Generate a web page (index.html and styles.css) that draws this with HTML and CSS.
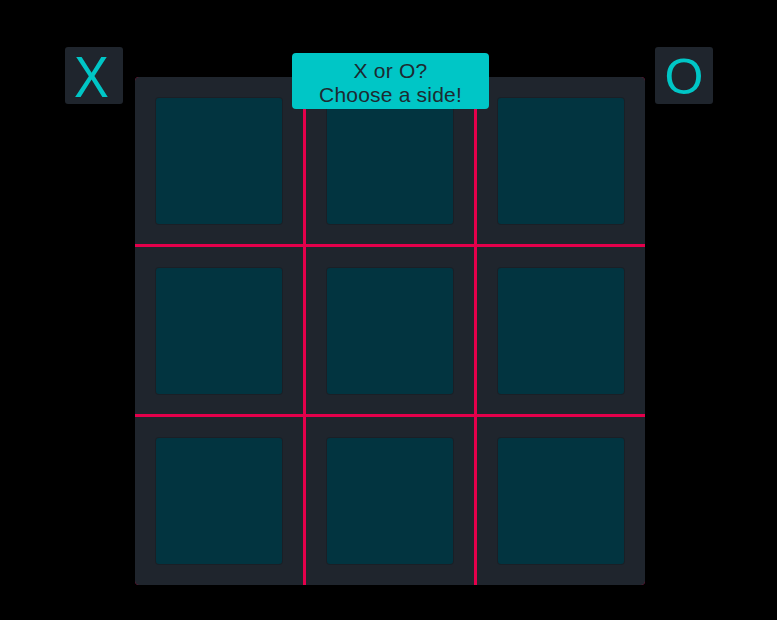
FILE: index.html
```html
<!DOCTYPE html>
<html>
<head>
<meta charset="utf-8">
<link rel="stylesheet" href="styles.css">
</head>
<body>
<div class="game">
  <div class="side side-x"><span class="mark mark-x">X</span></div>
  <div class="board">
    <div class="banner">X or O?<br>Choose a side!</div>
    <div class="cell"><div class="square"></div></div>
    <div class="cell"><div class="square"></div></div>
    <div class="cell"><div class="square"></div></div>
    <div class="cell"><div class="square"></div></div>
    <div class="cell"><div class="square"></div></div>
    <div class="cell"><div class="square"></div></div>
    <div class="cell"><div class="square"></div></div>
    <div class="cell"><div class="square"></div></div>
    <div class="cell"><div class="square"></div></div>
  </div>
  <div class="side side-o"><span class="mark mark-o">O</span></div>
</div>
</body>
</html>
```
FILE: styles.css
```css
html, body {
  margin: 0;
  padding: 0;
  background: #000;
  height: 100%;
}
body {
  font-family: "Liberation Sans", Arial, sans-serif;
}
.game {
  display: flex;
  align-items: flex-start;
  padding: 47px 0 0 65px;
}
.side {
  width: 58px;
  height: 57px;
  background: #1f252d;
  border-radius: 3px;
  display: flex;
  align-items: center;
  justify-content: center;
  color: #00c6c6;
  line-height: 1;
}
.side-x { margin-right: 12px; }
.side-o { margin-left: 10px; }
.mark-x {
  font-size: 58px;
  display: inline-block;
  transform: scaleX(0.9);
  margin-top: 3px;
  margin-right: 5px;
}
.mark-o {
  font-size: 50px;
  display: inline-block;
  margin-top: 2px;
}
.board {
  position: relative;
  margin-top: 30px;
  width: 510px;
  height: 508px;
  display: grid;
  grid-template-columns: 168px 168px 168px;
  grid-template-rows: 167px 167px 168px;
  gap: 3px;
  background: #e4004b;
  border-radius: 4px;
}
.cell {
  background: #1f252d;
  display: flex;
  align-items: center;
  justify-content: center;
}
.cell:nth-child(2) { border-top-left-radius: 4px; }
.cell:nth-child(4) { border-top-right-radius: 4px; }
.cell:nth-child(8) { border-bottom-left-radius: 4px; }
.cell:nth-child(10) { border-bottom-right-radius: 4px; }
.square {
  width: 126px;
  height: 126px;
  background: #023440;
  border-radius: 3px;
  box-shadow: 0 0 0 1px rgba(0,0,0,0.15);
}
.banner {
  position: absolute;
  top: -24px;
  left: 157px;
  width: 197px;
  height: 56px;
  box-sizing: border-box;
  padding-top: 3px;
  background: #00c6c6;
  border-radius: 4px;
  color: #1d2a31;
  font-size: 21px;
  line-height: 24px;
  letter-spacing: 0.2px;
  text-align: center;
  display: flex;
  align-items: center;
  justify-content: center;
  z-index: 2;
}
```
